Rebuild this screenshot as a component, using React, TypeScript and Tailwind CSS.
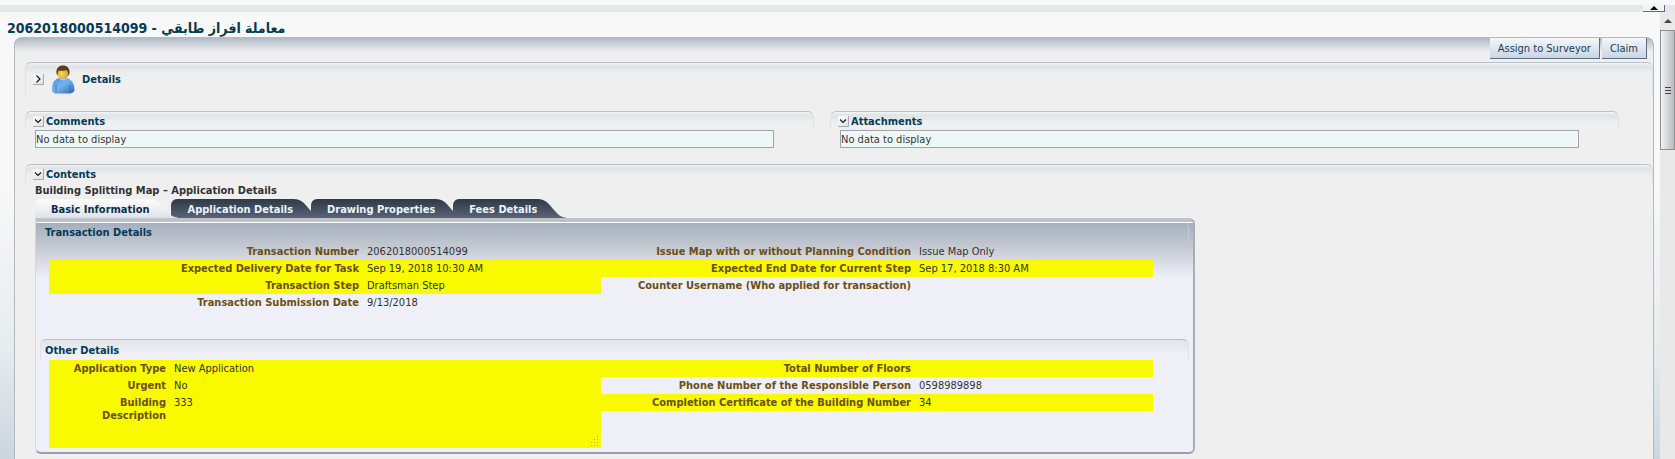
import type React from "react";
import { clsx } from "clsx";

type Field = { label: string; value?: string; marked?: boolean };

const TABS = ["Basic Information", "Application Details", "Drawing Properties", "Fees Details"];

const TRANSACTION_LEFT: Field[] = [
    { label: "Transaction Number", value: "2062018000514099" },
    { label: "Expected Delivery Date for Task", value: "Sep 19, 2018 10:30 AM", marked: true },
    { label: "Transaction Step", value: "Draftsman Step", marked: true },
    { label: "Transaction Submission Date", value: "9/13/2018" },
];

const TRANSACTION_RIGHT: Field[] = [
    { label: "Issue Map with or without Planning Condition", value: "Issue Map Only" },
    { label: "Expected End Date for Current Step", value: "Sep 17, 2018 8:30 AM", marked: true },
    { label: "Counter Username (Who applied for transaction)" },
];

const OTHER_LEFT: Field[] = [
    { label: "Application Type", value: "New Application", marked: true },
    { label: "Urgent", value: "No", marked: true },
];

const OTHER_RIGHT: Field[] = [
    { label: "Total Number of Floors", marked: true },
    { label: "Phone Number of the Responsible Person", value: "0598989898" },
    { label: "Completion Certificate of the Building Number", value: "34", marked: true },
];

function Toggle({ open, label }: { open?: boolean; label: string }) {
    return (
        <button
            type="button"
            aria-label={label}
            aria-expanded={!!open}
            className="flex size-[11px] shrink-0 items-center justify-center border-r border-b border-[#a3abb8] bg-gradient-to-br from-white to-[#dcdfe5]"
        >
            <svg viewBox="0 0 10 10" className="size-[10px]" fill="none" stroke="#111" strokeWidth="1.1">
                <path d={open ? "M2 3.5 5 6.5 8 3.5" : "M3.5 1.5 7 5 3.5 8.5"} />
            </svg>
        </button>
    );
}

function Header({ className, children }: { className?: string; children: React.ReactNode }) {
    return (
        <div
            className={clsx(
                "flex items-center rounded-t-md border-x border-t border-x-[#dfe3e6] border-t-[#b9c1c9] bg-[linear-gradient(to_bottom,#f4f6f7,#dfe4e8_3px,#efefef_11px)] pl-[7px] font-bold text-[#053a58]",
                className,
            )}
        >
            {children}
        </div>
    );
}

function EmptyBox({ title }: { title: string }) {
    return (
        <section>
            <Header className="h-[19px] gap-[2px]">
                <Toggle open label={`Collapse ${title}`} />
                <h2>{title}</h2>
            </Header>
            <p className="mr-10 ml-[10px] flex h-[18px] items-center border border-[#a0a4a8] bg-[#eff8f8]">
                No data to display
            </p>
        </section>
    );
}

function UserIcon() {
    return (
        <svg viewBox="0 0 24 30" className="h-[30px] w-6 shrink-0">
            <defs>
                <linearGradient id="shirt" x1="0" y1="0" x2="1" y2="1">
                    <stop offset="0" stopColor="#4a90d6" />
                    <stop offset="0.45" stopColor="#75b5ee" />
                    <stop offset="1" stopColor="#2468b4" />
                </linearGradient>
                <radialGradient id="face" cx="0.4" cy="0.6" r="0.7">
                    <stop offset="0" stopColor="#ffd75a" />
                    <stop offset="1" stopColor="#c88a1c" />
                </radialGradient>
            </defs>
            <path d="M1 25c0-8 3-11 7-12l4 2 4-2c4 1 7.500 5 7.500 12 0 2-2 3-4 3.500H4C2 28 1 27 1 25z" fill="url(#shirt)" />
            <path d="M5 20v8M19 20v8" stroke="#2d6db2" strokeWidth="0.8" />
            <path d="M8 13c1 3 7 3 8 0l-1-1H9z" fill="#9ccdf4" />
            <circle cx="12" cy="7.500" r="6.300" fill="url(#face)" />
            <path d="M5.500 8C5 3 8 .5 12 .5S19 3 18.500 8c0 1-.5 2-1 3 0-3-.5-5-2-6-3 1-6 1-8 .5-.7 1.500-.8 3-1 5-.5-1-1-2-1-2.500z" fill="#573d1c" />
        </svg>
    );
}

function Tab({ label, active }: { label: string; active?: boolean }) {
    return (
        <button
            type="button"
            role="tab"
            aria-selected={!!active}
            className={clsx("flex h-[19px]", active ? "relative z-10 -mr-[10px] text-[#0a2f4a]" : "-mr-[14px] text-[#e8f4ff]")}
        >
            <span
                className={clsx(
                    "flex h-full items-center rounded-tl-md bg-gradient-to-b pt-[2px] pl-4",
                    active ? "from-[#fdfdfd] to-[#dfe2e8]" : "from-[#2e3a46] to-[#5b6375]",
                )}
            >
                {label}
            </span>
            <svg viewBox="0 0 32 19" className="h-[19px] w-8" preserveAspectRatio="none">
                <defs>
                    <linearGradient id={active ? "slope-on" : "slope-off"} x1="0" y1="0" x2="0" y2="1">
                        <stop offset="0" stopColor={active ? "#fdfdfd" : "#2e3a46"} />
                        <stop offset="1" stopColor={active ? "#dfe2e8" : "#5b6375"} />
                    </linearGradient>
                </defs>
                <path d="M0 0C10 0 12 6 18 12 22 17 26 19 32 19H0z" fill={active ? "url(#slope-on)" : "url(#slope-off)"} />
            </svg>
        </button>
    );
}

function FieldRow({ label, value, marked, narrow }: Field & { narrow?: boolean }) {
    return (
        <div className={clsx("flex h-[17px] items-center", marked && "bg-[#f9f900]")}>
            <dt className={clsx("shrink-0 text-right font-bold text-[#6b4f14]", narrow ? "w-[117px]" : "w-[310px]")}>
                {label}
            </dt>
            <dd className="pl-2">{value}</dd>
        </div>
    );
}

export default function App() {
    return (
        <div className="flex min-h-screen flex-col bg-[#f8f8f8] font-['DejaVu_Sans_Condensed','DejaVu_Sans',sans-serif] text-[11px] leading-[13px] text-[#333]">
            <div className="mt-[5px] flex h-[7px] justify-end bg-[#e6e7eb] pr-[10px]">
                <button
                    type="button"
                    aria-label="Collapse top pane"
                    className="flex w-[22px] items-center justify-center border-r border-b border-[#5f6b80] bg-[#f2f4f7]"
                >
                    <svg viewBox="0 0 8 4" className="h-1 w-2">
                        <path d="M0 4 4 0l4 4z" />
                    </svg>
                </button>
            </div>

            <div className="flex flex-1">
                <div className="flex flex-1 flex-col bg-gradient-to-b from-[#f8f8f8] from-40% via-[#e6ecee] via-75% to-[#ccd5de]">
                    <h1 className="flex h-[25px] items-center pt-[7px] pl-[7px] text-[14px] leading-[18px] font-bold text-[#053a58]" dir="ltr">
                        2062018000514099 - معاملة افراز طابقي
                    </h1>

                    <main className="mr-[6px] ml-[14px] flex-1 rounded-t-lg border-x border-t border-[#b4bac2] bg-[linear-gradient(to_bottom,#b0bac5,#efefef_14px)] pb-[7px]">
                        <div className="flex h-6 justify-end gap-[2px] pr-[6px]">
                            {["Assign to Surveyor", "Claim"].map((text) => (
                                <button
                                    key={text}
                                    type="button"
                                    className="h-[21px] border-r border-b border-[#5b6d88] bg-gradient-to-b from-[#f4f7fa] to-[#c9d6e3] px-2 text-[#143c5c]"
                                >
                                    {text}
                                </button>
                            ))}
                        </div>

                        <div className="ml-[10px]">
                            <section className="h-[49px]">
                                <Header className="h-[34px] gap-[7px]">
                                    <Toggle label="Expand Details" />
                                    <UserIcon />
                                    <h2>Details</h2>
                                </Header>
                            </section>

                            <div className="mr-[34px] grid grid-cols-2 gap-4">
                                <EmptyBox title="Comments" />
                                <EmptyBox title="Attachments" />
                            </div>

                            <section className="mt-4">
                                <Header className="h-5 gap-[2px]">
                                    <Toggle open label="Collapse Contents" />
                                    <h2>Contents</h2>
                                </Header>

                                <div className="mr-8 ml-[10px] max-w-[1160px]">
                                    <h3 className="flex h-[15px] items-center pb-[2px] font-bold">
                                        Building Splitting Map – Application Details
                                    </h3>
                                    <div role="tablist" className="flex font-bold">
                                        {TABS.map((tab, i) => (
                                            <Tab key={tab} label={tab} active={i === 0} />
                                        ))}
                                    </div>

                                    <div
                                        role="tabpanel"
                                        className="rounded-tr-md rounded-b-md border-r-2 border-b-2 border-l border-r-[#a9adb8] border-b-[#9b9fa8] border-l-[#d5d7e0] bg-[#efeff8] bg-[linear-gradient(to_bottom,#bcc3cd_4px,white_4px,white_5px,#a5b0bd_5px,#c3c8d0_28px,#efeff8_60px)] pt-1 pb-1"
                                    >
                                        <section className="mx-1 h-[117px]">
                                            <h4 className="flex h-[21px] items-center rounded-t-md border-r border-[#c5cbd4] pl-[5px] font-bold text-[#053a58]">
                                                Transaction Details
                                            </h4>
                                            <div className="mr-9 ml-[9px] grid grid-cols-2 items-start">
                                                <dl>
                                                    {TRANSACTION_LEFT.map((field) => (
                                                        <FieldRow key={field.label} {...field} />
                                                    ))}
                                                </dl>
                                                <dl>
                                                    {TRANSACTION_RIGHT.map((field) => (
                                                        <FieldRow key={field.label} {...field} />
                                                    ))}
                                                </dl>
                                            </div>
                                        </section>

                                        <section className="mx-1">
                                            <h4 className="flex h-[21px] items-center rounded-t-md border-x border-t border-x-[#e0e2ea] border-t-[#babdc9] bg-gradient-to-b from-[#e1e5e8] to-[#efeff8] to-70% pl-1 font-bold text-[#053a58]">
                                                Other Details
                                            </h4>
                                            <div className="mr-9 ml-[9px] grid grid-cols-2 items-start">
                                                <div className="bg-[#f9f900]">
                                                    <dl>
                                                        {OTHER_LEFT.map((field) => (
                                                            <FieldRow key={field.label} {...field} narrow />
                                                        ))}
                                                    </dl>
                                                    <div className="relative flex h-[54px]">
                                                        <label
                                                            htmlFor="building-description"
                                                            className="w-[117px] shrink-0 pt-[2px] pl-8 text-right font-bold text-[#6b4f14]"
                                                        >
                                                            Building Description
                                                        </label>
                                                        <textarea
                                                            id="building-description"
                                                            defaultValue="333"
                                                            className="flex-1 resize-none pt-[2px] pl-2 outline-none"
                                                        />
                                                        {/* dotted resize grip */}
                                                        <svg viewBox="0 0 10 10" className="pointer-events-none absolute right-[2px] bottom-[2px] size-[10px]" fill="#a8a878">
                                                            <path d="M8 0h1v1H8zM8 3h1v1H8zM5 3h1v1H5zM8 6h1v1H8zM5 6h1v1H5zM2 6h1v1H2zM8 9h1v1H8zM5 9h1v1H5zM2 9h1v1H2z" />
                                                        </svg>
                                                    </div>
                                                </div>
                                                <dl>
                                                    {OTHER_RIGHT.map((field) => (
                                                        <FieldRow key={field.label} {...field} />
                                                    ))}
                                                </dl>
                                            </div>
                                        </section>
                                    </div>
                                </div>
                            </section>
                        </div>
                    </main>
                </div>

                <div aria-hidden="true" className="flex w-[15px] flex-col items-center bg-[#e8e9e8]">
                    <svg viewBox="0 0 8 4" className="my-[7px] h-1 w-2">
                        <path d="M0 4 4 0l4 4z" fill="#444" />
                    </svg>
                    <div className="flex h-[120px] w-full flex-col items-center justify-center gap-[2px] border border-[#8c8f92] bg-gradient-to-r from-[#f2f3f3] to-[#b9bcbf]">
                        <span className="h-px w-[6px] bg-[#444]" />
                        <span className="h-px w-[6px] bg-[#444]" />
                        <span className="h-px w-[6px] bg-[#444]" />
                    </div>
                </div>
            </div>
        </div>
    );
}
